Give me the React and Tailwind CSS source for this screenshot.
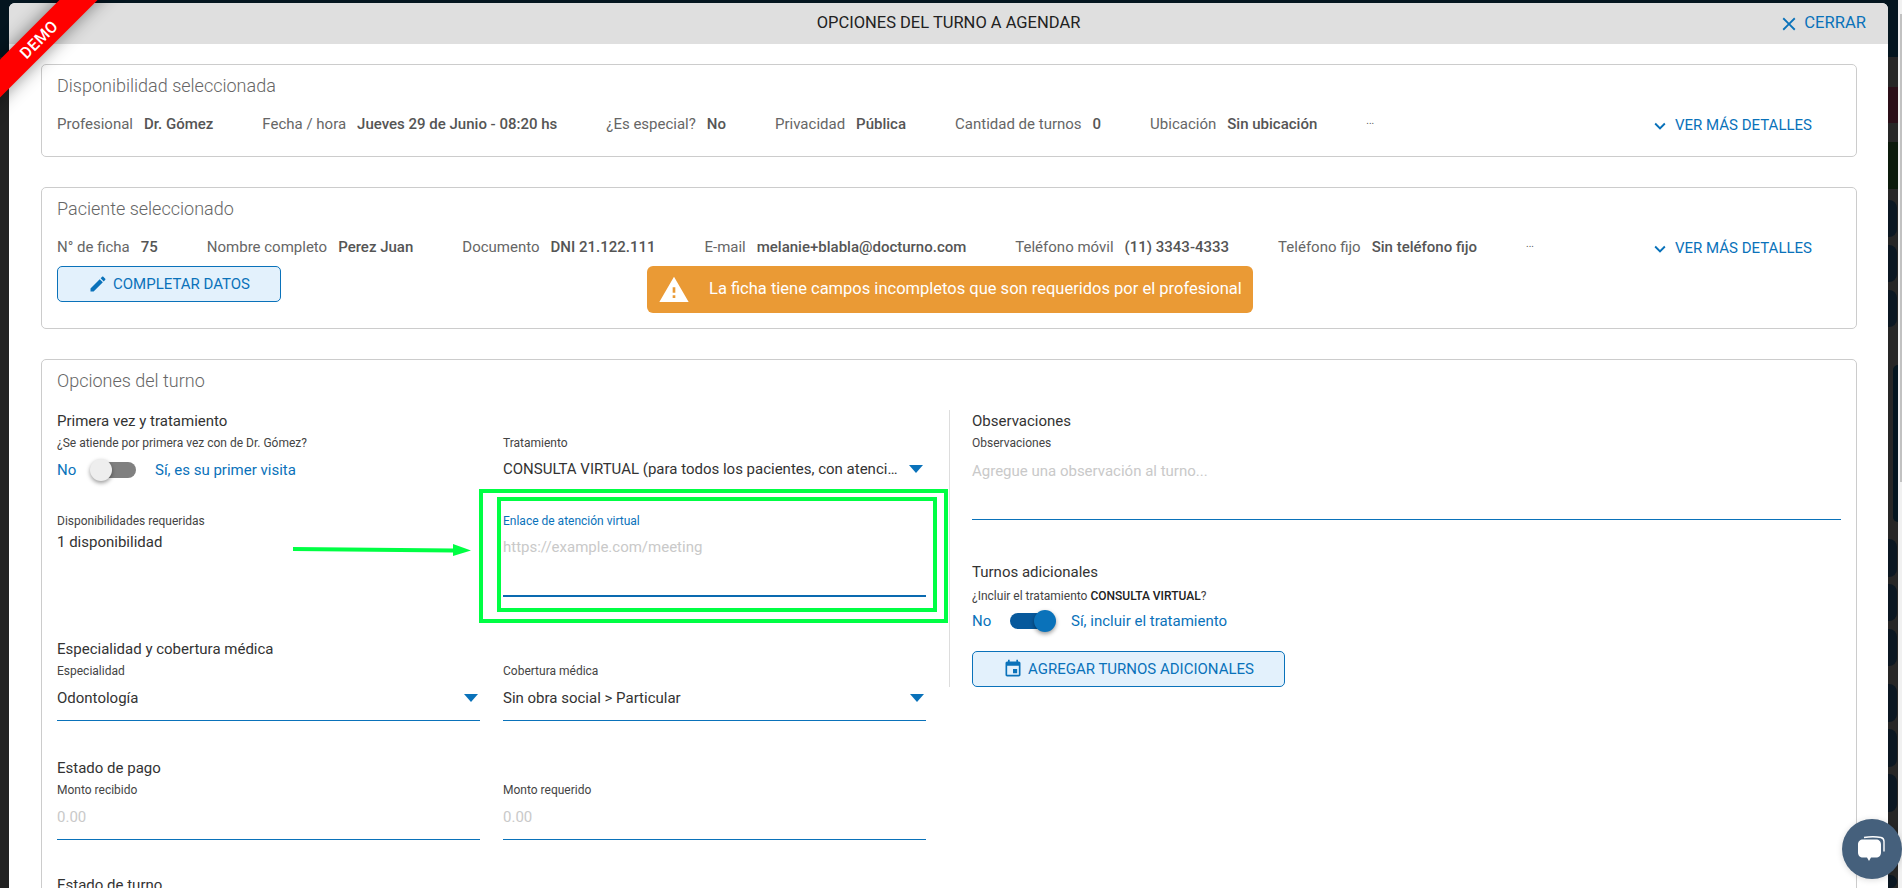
import React from 'react';

const BLUE = 'text-[#0a72ba]';

const strip = [
  'h-[54px] bg-[#04151f]',
  'h-[30px]',
  'h-[36px] bg-[#2a0f18]',
  'h-[19px]',
  'h-[47px] bg-[#0c1a0c]',
  'h-[11px]',
  'h-[37px] bg-[#0b1722] rounded-r-lg w-[9px]',
  'h-[8px]',
  'h-[37px] bg-[#0b1722] rounded-r-lg w-[9px]',
  'h-[8px]',
  'h-[37px] bg-[#0b1722] rounded-r-lg w-[9px]',
  'h-[38px]',
  'h-[157px] bg-[#04151f] rounded-l-lg ml-[5px]',
  'h-[17px]',
  'h-[38px] bg-[#0b1722] rounded-r-lg w-[9px]',
  'h-[7px]',
  'h-[37px] bg-[#0b1722] rounded-r-lg w-[9px]',
  'h-[8px]',
  'h-[37px] bg-[#0b1722] rounded-r-lg w-[9px]',
  'h-[18px]',
  'h-[38px] bg-[#0b1722] rounded-r-lg w-[9px]',
  'h-[7px]',
  'h-[38px] bg-[#0b1722] rounded-r-lg w-[9px]',
  'h-[7px]',
  'h-[38px] bg-[#0b1722] rounded-r-lg w-[9px]',
  'h-[63px]',
  'h-[13px] bg-[#0b1722] rounded-r-lg w-[9px]',
];

function MaterialIcon({ d, className }) {
  return (
    <svg viewBox="0 0 24 24" className={className} fill="currentColor">
      <path d={d} />
    </svg>
  );
}

const ICONS = {
  close: 'M19 6.41L17.59 5 12 10.59 6.41 5 5 6.41 10.59 12 5 17.59 6.41 19 12 13.41 17.59 19 19 17.59 13.41 12z',
  expand: 'M16.59 8.59L12 13.17 7.41 8.59 6 10l6 6 6-6z',
  edit: 'M3 17.25V21h3.75L17.81 9.94l-3.75-3.75L3 17.25zM20.71 7.04c.39-.39.39-1.02 0-1.41l-2.34-2.34c-.39-.39-1.02-.39-1.41 0l-1.83 1.83 3.75 3.75 1.83-1.83z',
  warning: 'M1 21h22L12 2 1 21zm12-3h-2v-2h2v2zm0-4h-2v-4h2v4z',
  event: 'M17 12h-5v5h5v-5zM16 1v2H8V1H6v2H5c-1.11 0-1.99.9-1.99 2L3 19c0 1.1.89 2 2 2h14c1.1 0 2-.9 2-2V5c0-1.1-.9-2-2-2h-1V1h-2zm3 18H5V8h14v11z',
};

function Detail({ label, value, className = '' }) {
  return (
    <span className={`flex items-center whitespace-nowrap ${className}`}>
      <span className="text-[#666666] mr-[11px]">{label}</span>
      <span className="font-medium text-[#555555]">{value}</span>
    </span>
  );
}

function Dots() {
  return <span className="text-[10px] leading-none text-[#555555] -mt-[7px]">...</span>;
}

function MoreDetails() {
  return (
    <span className={`ml-auto mr-[44px] mt-[2px] flex items-center text-[15px] ${BLUE}`}>
      <MaterialIcon d={ICONS.expand} className="w-[22px] h-[22px] mr-[4px] mt-[1px]" />
      VER MÁS DETALLES
    </span>
  );
}

function Heading({ children }) {
  return <div className="h-[25px] leading-[23px] text-[15px] text-[#333333]">{children}</div>;
}

function Label({ children, className = 'text-[#444444]' }) {
  return <div className={`h-[16px] leading-[16px] text-[12px] ${className}`}>{children}</div>;
}

function Arrow({ className = '' }) {
  return (
    <svg viewBox="0 0 14 8" className={`w-[14px] h-[8px] shrink-0 ${BLUE} ${className}`} fill="currentColor">
      <polygon points="0,0 14,0 7,8" />
    </svg>
  );
}

function Field({ label, value, placeholder, select }) {
  return (
    <div>
      <Label>{label}</Label>
      <div className="h-[41px] pb-[3px] flex items-center text-[#333333]">
        <span className={placeholder ? 'text-[#c9c9c9]' : ''}>{value}</span>
        {select && <Arrow className="ml-auto mr-[2px]" />}
      </div>
      <div className="h-px bg-[#0a72ba]" />
    </div>
  );
}

function Toggle({ on }) {
  return (
    <span className="relative inline-block w-[43px] h-[30px] shrink-0">
      <span className={`absolute left-0 right-0 top-[7px] h-[16px] rounded-full ${on ? 'bg-[#07599c]' : 'bg-[#808080]'}`} />
      <span
        className={`absolute top-[4px] w-[22px] h-[22px] rounded-full shadow-[0_2px_4px_rgba(0,0,0,0.4)] ${
          on ? 'right-[-3px] bg-[#0a72ba]' : 'left-[-3px] bg-[#eeeeee]'
        }`}
      />
    </span>
  );
}

function OutlineButton({ icon, children, className }) {
  return (
    <button className={`flex items-center justify-center rounded-[5px] border border-[#0a72ba] bg-[#e3f1fc] text-[15px] ${BLUE} ${className}`}>
      <MaterialIcon d={icon} className="w-[20px] h-[20px] mr-[5px]" />
      {children}
    </button>
  );
}

export default function App() {
  return (
    <div className="relative flex h-[888px] w-[1902px] overflow-hidden bg-[#262626] font-[Roboto,sans-serif] text-[15px]">
      {/* dimmed page behind the modal */}
      <div className="w-[9px] shrink-0 bg-[#222222]">
        <div className="h-[57px] bg-[#04151f]" />
      </div>

      <div className="flex-1 min-w-0 bg-[#04151f] pt-[3px] h-[888px]">
        <div className="h-[885px] rounded-t-[6px] bg-white overflow-hidden">
          <div className="relative flex h-[41px] items-center justify-center bg-[#dfdfdf] text-[16.5px] text-[#222222]">
            OPCIONES DEL TURNO A AGENDAR
            <span className={`absolute right-[22px] top-0 flex h-[41px] items-center text-[16.6px] ${BLUE}`}>
              <MaterialIcon d={ICONS.close} className="w-[22px] h-[22px] mr-[4px]" />
              CERRAR
            </span>
          </div>

          <div className="pl-[32px] pr-[31px] pt-[20px]">
            <section className="h-[93px] rounded-[5px] border border-[#cccccc] pl-[15px] pt-[8px]">
              <h2 className="h-[26px] leading-[26px] text-[18px] font-light text-[#666666]">Disponibilidad seleccionada</h2>
              <div className="mt-[10px] flex h-[30px] items-center">
                <Detail label="Profesional" value="Dr. Gómez" className="mr-[49px]" />
                <Detail label="Fecha / hora" value="Jueves 29 de Junio - 08:20 hs" className="mr-[49px]" />
                <Detail label="¿Es especial?" value="No" className="mr-[49px]" />
                <Detail label="Privacidad" value="Pública" className="mr-[49px]" />
                <Detail label="Cantidad de turnos" value="0" className="mr-[49px]" />
                <Detail label="Ubicación" value="Sin ubicación" className="mr-[49px]" />
                <Dots />
                <MoreDetails />
              </div>
            </section>

            <section className="mt-[30px] h-[142px] rounded-[5px] border border-[#cccccc] pl-[15px] pt-[8px]">
              <h2 className="h-[26px] leading-[26px] text-[18px] font-light text-[#666666]">Paciente seleccionado</h2>
              <div className="mt-[10px] flex h-[30px] items-center">
                <Detail label="N° de ficha" value="75" className="mr-[49px]" />
                <Detail label="Nombre completo" value="Perez Juan" className="mr-[49px]" />
                <Detail label="Documento" value="DNI 21.122.111" className="mr-[49px]" />
                <Detail label="E-mail" value="melanie+blabla@docturno.com" className="mr-[49px]" />
                <Detail label="Teléfono móvil" value="(11) 3343-4333" className="mr-[49px]" />
                <Detail label="Teléfono fijo" value="Sin teléfono fijo" className="mr-[49px]" />
                <Dots />
                <MoreDetails />
              </div>
              <div className="mt-[4px] flex items-start">
                <OutlineButton icon={ICONS.edit} className="h-[36px] w-[224px]">COMPLETAR DATOS</OutlineButton>
                <div className="ml-[366px] flex h-[47px] w-[606px] items-center rounded-[6px] bg-[#ea9a35] pl-[11px] text-[16.5px] text-white">
                  <MaterialIcon d={ICONS.warning} className="w-[32px] h-[32px] mr-[19px]" />
                  La ficha tiene campos incompletos que son requeridos por el profesional
                </div>
              </div>
            </section>

            <section className="mt-[30px] h-[600px] rounded-[5px] border border-[#cccccc] pl-[15px] pt-[8px]">
              <h2 className="h-[26px] leading-[26px] text-[18px] font-light text-[#666666]">Opciones del turno</h2>
              <div className="mt-[16px] flex items-start">
                <div className="relative w-[869px] shrink-0">
                  <Heading>Primera vez y tratamiento</Heading>
                  <div className="grid grid-cols-2 gap-x-[23px]">
                    <div className="h-[78px]">
                      <Label>¿Se atiende por primera vez con de Dr. Gómez?</Label>
                      <div className={`mt-[4px] flex h-[30px] items-center ${BLUE}`}>
                        <span className="w-[36px]">No</span>
                        <Toggle />
                        <span className="ml-[19px]">Sí, es su primer visita</span>
                      </div>
                    </div>
                    <div className="h-[78px]">
                      <Label>Tratamiento</Label>
                      <div className="mt-[3px] flex h-[30px] items-center text-[#333333]">
                        <span className="truncate w-[396px]">CONSULTA VIRTUAL (para todos los pacientes, con atención virtual)</span>
                        <Arrow className="ml-[10px]" />
                      </div>
                    </div>
                    <div>
                      <Label>Disponibilidades requeridas</Label>
                      <div className="mt-[2px] text-[#333333]">1 disponibilidad</div>
                    </div>
                    <div>
                      <Label className="text-[#0a72ba]">Enlace de atención virtual</Label>
                      <div className="h-[66px] pt-[7px] text-[#c9c9c9]">https://example.com/meeting</div>
                      <div className="h-[2px] bg-[#0a6ab0]" />
                    </div>
                  </div>

                  {/* green annotation drawn on top of the screenshot */}
                  <div className="absolute left-[422px] top-[79px] h-[134px] w-[469px] border-[4px] border-[#00ff44]" />
                  <div className="absolute left-[440px] top-[87px] h-[115px] w-[440px] border-[4px] border-[#00ff44]" />
                  <svg className="absolute left-[236px] top-[132px] w-[180px] h-[16px] text-[#00ff44]" viewBox="0 0 180 16" fill="currentColor">
                    <polygon points="0,5 160,6.5 160,2 178,8.5 160,14 160,10.5 0,9" />
                  </svg>

                  <div className="mt-[41px]">
                    <Heading>Especialidad y cobertura médica</Heading>
                    <div className="grid grid-cols-2 gap-x-[23px]">
                      <Field label="Especialidad" value="Odontología" select />
                      <Field label="Cobertura médica" value="Sin obra social > Particular" select />
                    </div>
                  </div>

                  <div className="mt-[36px]">
                    <Heading>Estado de pago</Heading>
                    <div className="grid grid-cols-2 gap-x-[23px]">
                      <Field label="Monto recibido" value="0.00" placeholder />
                      <Field label="Monto requerido" value="0.00" placeholder />
                    </div>
                  </div>

                  <div className="mt-[34px]">
                    <Heading>Estado de turno</Heading>
                  </div>
                </div>

                <div className="ml-[23px] w-[892px] shrink-0 border-l border-[#dddddd] pl-[22px]">
                  <Heading>Observaciones</Heading>
                  <Label>Observaciones</Label>
                  <div className="h-[68px] pt-[9px] text-[#c9c9c9]">Agregue una observación al turno...</div>
                  <div className="h-px w-[869px] bg-[#0a72ba]" />

                  <div className="mt-[41px]">
                    <Heading>Turnos adicionales</Heading>
                    <div className="h-[20px] leading-[20px] text-[12px] text-[#444444]">
                      ¿Incluir el tratamiento <b className="font-medium text-[#222222]">CONSULTA VIRTUAL</b>?
                    </div>
                    <div className={`flex h-[30px] items-center ${BLUE}`}>
                      <span className="w-[38px]">No</span>
                      <Toggle on />
                      <span className="ml-[18px]">Sí, incluir el tratamiento</span>
                    </div>
                    <OutlineButton icon={ICONS.event} className="mt-[15px] h-[36px] w-[313px]">AGREGAR TURNOS ADICIONALES</OutlineButton>
                  </div>
                </div>
              </div>
            </section>
          </div>
        </div>
      </div>

      <div className="w-[10px] shrink-0">
        <div className="h-[3px] bg-[#04151f]" />
        {strip.map((cls, i) => (
          <div key={i} className={cls} />
        ))}
      </div>

      <div className="w-[4px] shrink-0 bg-[#f1f1f1] pt-[14px]">
        <div className="ml-[2px] h-[468px] w-[2px] bg-[#c1c1c1]" />
      </div>

      {/* demo ribbon */}
      <div className="pointer-events-none absolute left-0 top-0 h-[140px] w-[140px] overflow-hidden">
        <div className="absolute left-[-61px] top-[26px] flex h-[27px] w-[200px] -rotate-45 items-center justify-center bg-[#ff0000] text-[16px] font-medium tracking-wide text-white shadow-[0_0_18px_rgba(0,0,0,0.45)]">
          DEMO
        </div>
      </div>

      {/* chat launcher */}
      <div className="absolute left-[1842px] top-[819px] flex h-[60px] w-[60px] items-center justify-center rounded-full bg-[#45607c] shadow-[0_1px_6px_rgba(0,0,0,0.15)]">
        <svg viewBox="0 0 32 30" className="h-[30px] w-[32px]" fill="none">
          <path d="M8 3.5c6-1 12-1 17 0 2 .5 3 2 3 4v10" stroke="#ffffff" strokeWidth="1.4" />
          <path
            d="M7 5.5h13c3 0 5 2 5 5v8c0 3-2 5-5 5h-5l-2 3.5-2-3.5H7c-3 0-5-2-5-5v-8c0-3 2-5 5-5z"
            fill="#ffffff"
          />
        </svg>
      </div>
    </div>
  );
}
